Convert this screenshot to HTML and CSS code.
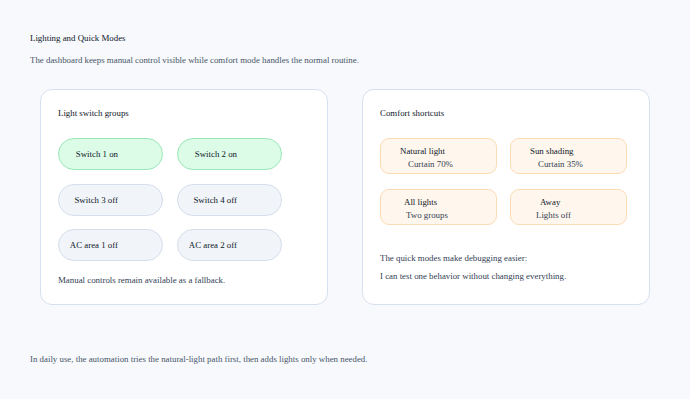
FILE: index.html
```html
<!DOCTYPE html>
<html>
<head>
<meta charset="utf-8">
<link rel="stylesheet" href="styles.css">
</head>
<body>
<main class="page">
  <h1 class="title">Lighting and Quick Modes</h1>
  <p class="lead">The dashboard keeps manual control visible while comfort mode handles the normal routine.</p>
  <section class="cards">
    <div class="card">
      <h2 class="card-title">Light switch groups</h2>
      <div class="switches">
        <div class="switch on">Switch 1 on</div>
        <div class="switch on">Switch 2 on</div>
        <div class="switch">Switch 3 off</div>
        <div class="switch">Switch 4 off</div>
        <div class="switch">AC area 1 off</div>
        <div class="switch">AC area 2 off</div>
      </div>
      <p class="note">Manual controls remain available as a fallback.</p>
    </div>
    <div class="card">
      <h2 class="card-title">Comfort shortcuts</h2>
      <div class="tiles">
        <div class="tile t-natural"><span class="name">Natural light</span><span class="sub">Curtain 70%</span></div>
        <div class="tile t-sun"><span class="name">Sun shading</span><span class="sub">Curtain 35%</span></div>
        <div class="tile t-all"><span class="name">All lights</span><span class="sub">Two groups</span></div>
        <div class="tile t-away"><span class="name">Away</span><span class="sub">Lights off</span></div>
      </div>
      <div class="notes">
        <p class="note">The quick modes make debugging easier:</p>
        <p class="note">I can test one behavior without changing everything.</p>
      </div>
    </div>
  </section>
  <p class="footer">In daily use, the automation tries the natural-light path first, then adds lights only when needed.</p>
</main>
</body>
</html>
```
FILE: styles.css
```css
html, body {
  margin: 0;
  padding: 0;
  background: #f7f9fc;
}
body {
  font-family: "Liberation Serif", "Times New Roman", serif;
  font-size: 8.85px;
  line-height: 14px;
  color: #0f172a;
}
.page {
  padding: 31px 30px 0 30px;
}
.title {
  margin: 0;
  font-size: 8.85px;
  font-weight: normal;
  line-height: 14px;
  color: #0f172a;
}
.lead {
  margin: 8px 0 0 0;
  color: #475569;
}
.cards {
  display: grid;
  grid-template-columns: 288px 288px;
  column-gap: 34px;
  margin: 22px 0 0 10px;
}
.card {
  background: #ffffff;
  border: 1px solid #d7e0ee;
  border-radius: 12px;
  height: 216px;
  box-sizing: border-box;
  padding: 16px 17px 0 17px;
}
.card-title {
  margin: 0;
  font-size: 8.85px;
  font-weight: normal;
  line-height: 14px;
  color: #0f172a;
}
.switches {
  display: grid;
  grid-template-columns: 105px 105px;
  column-gap: 14px;
  row-gap: 13.5px;
  margin-top: 18px;
}
.switch {
  height: 32px;
  box-sizing: border-box;
  border-radius: 16px;
  border: 1px solid #d6dfeb;
  background: #f1f5f9;
  display: flex;
  align-items: center;
  justify-content: flex-end;
  padding-right: 44px;
  color: #0f172a;
}
.switch.on {
  background: #dcfce7;
  border-color: #9ae8b8;
}
.note {
  margin: 0;
  color: #334155;
}
.card > .note {
  margin-top: 12px;
}
.tiles {
  display: grid;
  grid-template-columns: 117px 117px;
  column-gap: 13px;
  row-gap: 15px;
  margin-top: 18px;
}
.tile {
  height: 36px;
  box-sizing: border-box;
  border-radius: 9px;
  border: 1px solid #fddcb5;
  background: #fff7ed;
  display: flex;
  flex-direction: column;
  justify-content: center;
  line-height: 13px;
  padding-top: 3px;
}
.tile .name {
  color: #0f172a;
}
.tile .sub {
  color: #334155;
}
.t-natural .name { margin-left: 19px; }
.t-natural .sub { margin-left: 27px; }
.t-sun .name { margin-left: 19px; }
.t-sun .sub { margin-left: 27px; }
.t-all .name { margin-left: 23px; }
.t-all .sub { margin-left: 25px; }
.t-away .name { margin-left: 29px; }
.t-away .sub { margin-left: 25px; }
.notes {
  margin-top: 26px;
  display: flex;
  flex-direction: column;
  gap: 4px;
}
.footer {
  margin: 47px 0 0 0;
  color: #475569;
}
```
